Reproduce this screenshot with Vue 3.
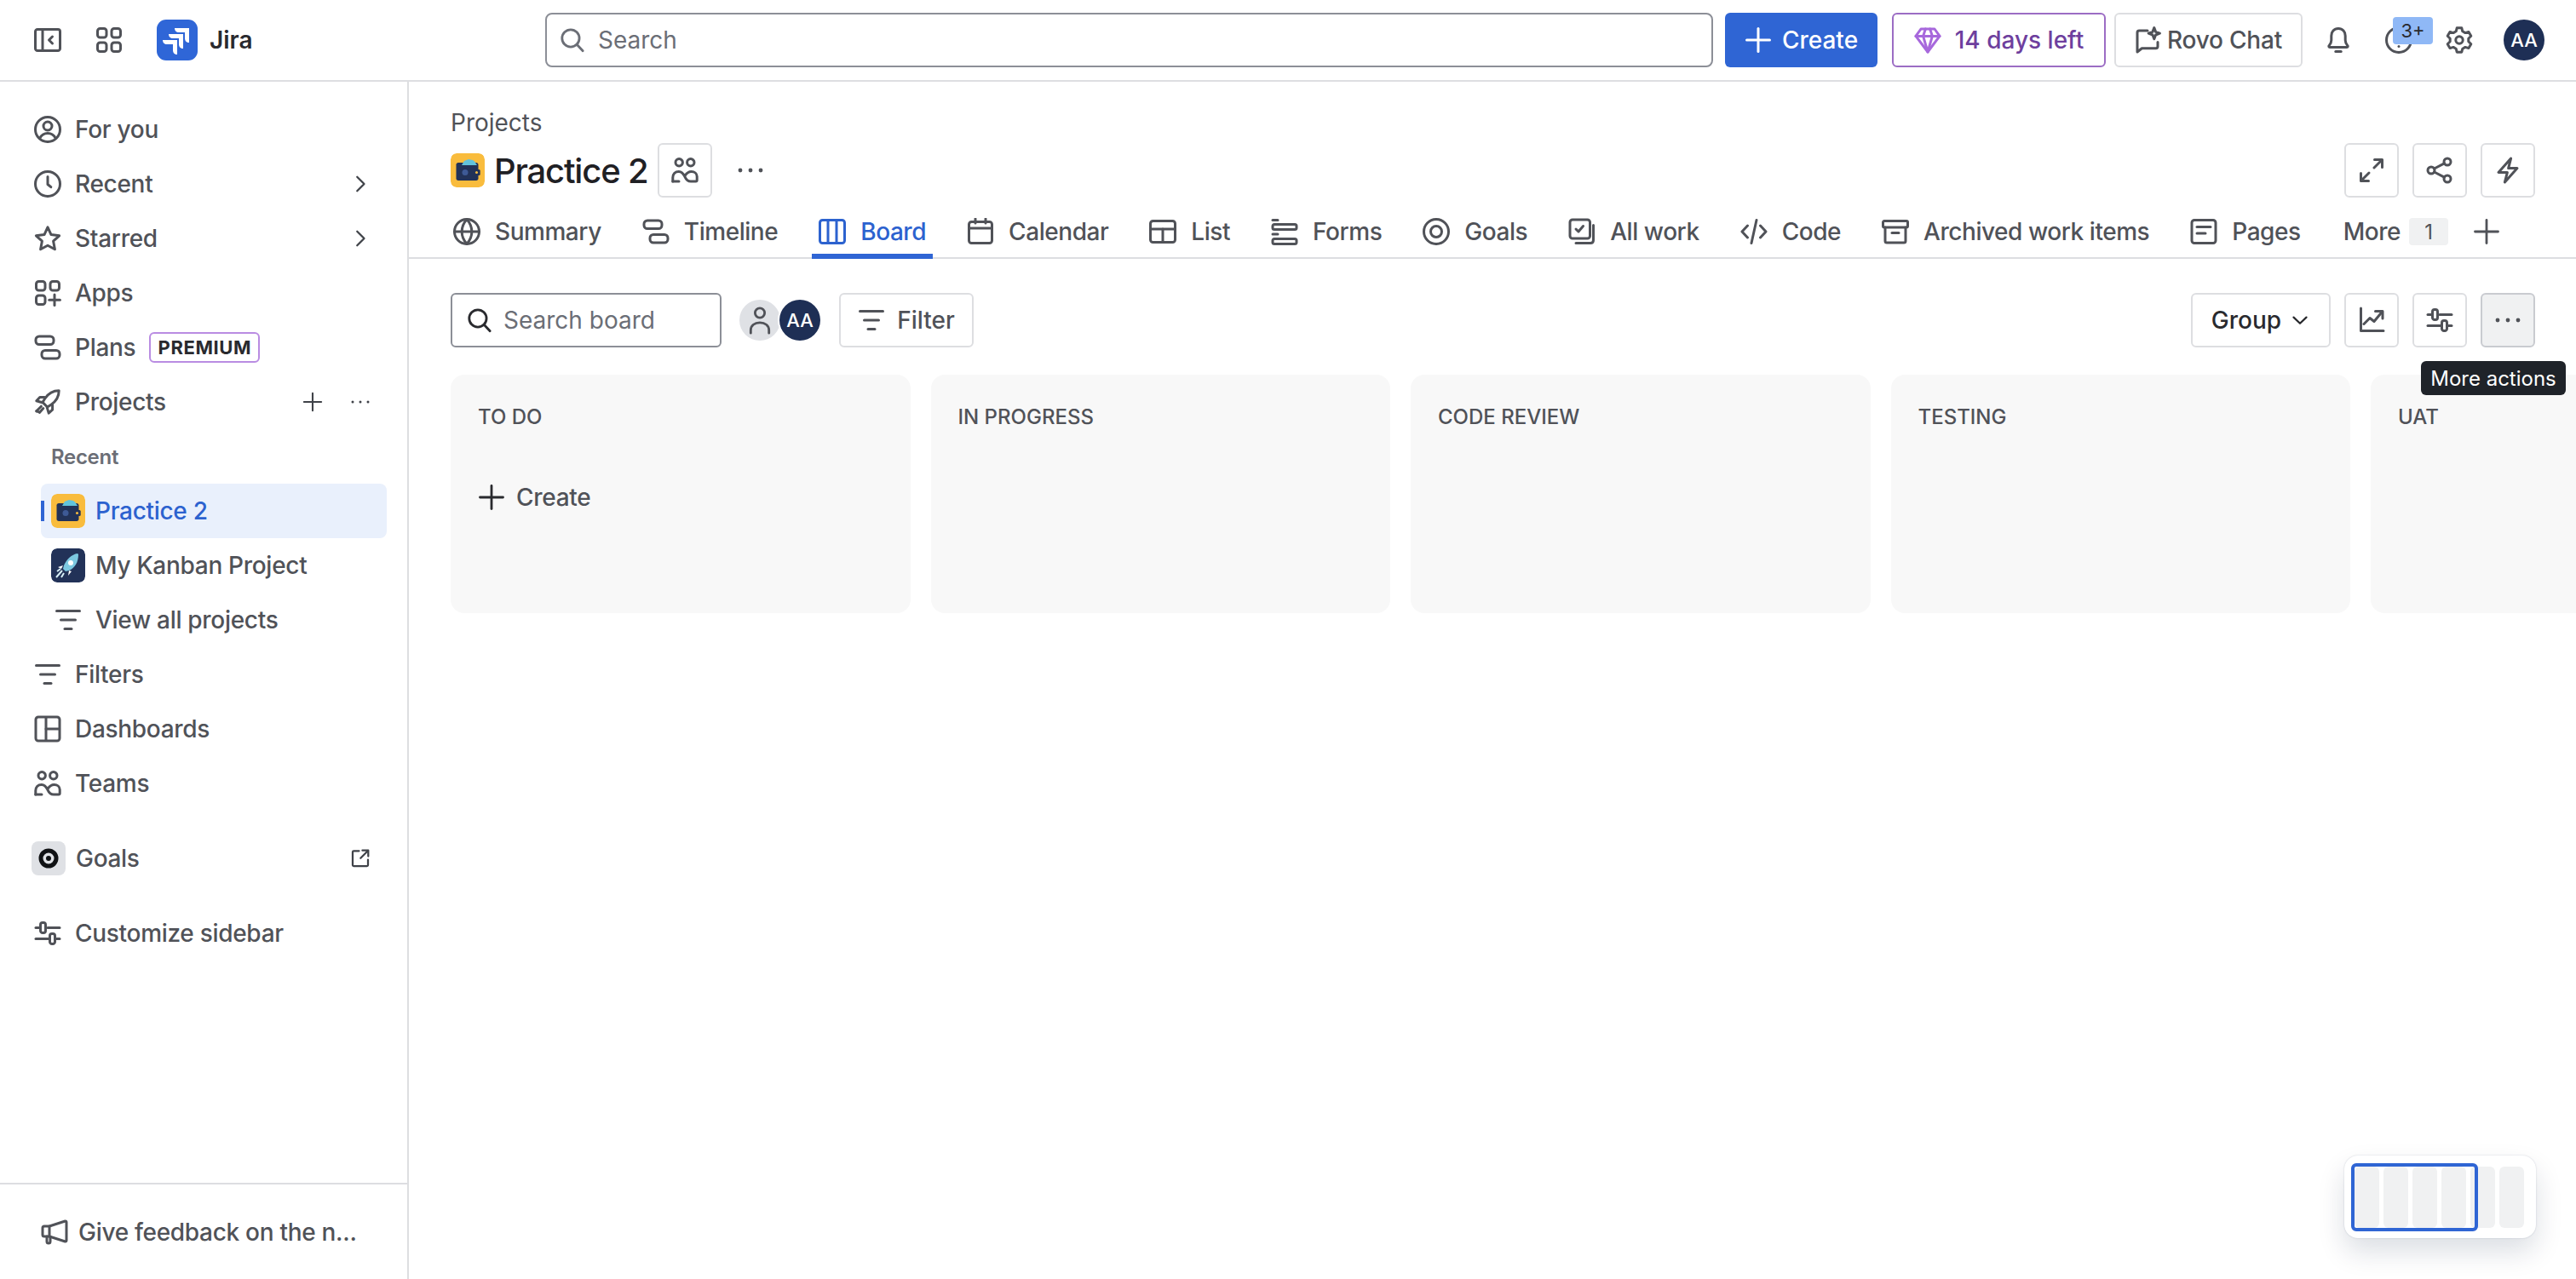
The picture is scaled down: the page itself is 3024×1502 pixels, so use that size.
<script setup>
import { h } from 'vue'

const rr = (x, y, w, h2, r) =>
  `M${x + r} ${y}h${w - 2 * r}a${r} ${r} 0 0 1 ${r} ${r}v${h2 - 2 * r}a${r} ${r} 0 0 1 -${r} ${r}h-${w - 2 * r}a${r} ${r} 0 0 1 -${r} -${r}v-${h2 - 2 * r}a${r} ${r} 0 0 1 ${r} -${r}z`
const c = (x, y, r) => `M${x - r} ${y}a${r} ${r} 0 1 0 ${2 * r} 0a${r} ${r} 0 1 0 -${2 * r} 0z`

const paths = {
  collapse: [rr(0.75, 1.75, 14.5, 12.5, 1.25), 'M5 2v12', 'M10.75 6 8.75 8l2 2'],
  apps: [rr(1.25, 1.25, 5.25, 5.25, 1.5), rr(9.5, 1.25, 5.25, 5.25, 1.5), rr(1.25, 9.5, 5.25, 5.25, 1.5), rr(9.5, 9.5, 5.25, 5.25, 1.5)],
  appsAdd: [rr(1.25, 1.25, 5.25, 5.25, 1.5), rr(9.5, 1.25, 5.25, 5.25, 1.5), rr(1.25, 9.5, 5.25, 5.25, 1.5), 'M12 9v6.25', 'M8.9 12.1h6.3'],
  foryou: [c(8, 8, 7.25), c(8, 6, 2.5), 'M3.4 13.2c1-2 2.6-2.9 4.6-2.9s3.6.9 4.6 2.9'],
  clock: [c(8, 8, 7.25), 'M8 3.75v4.5l1.9 1.6'],
  star: ['M8 1.4l2 4.4 4.8.6-3.5 3.2.9 4.8L8 12.1l-4.2 2.3.9-4.8-3.5-3.2 4.8-.6z'],
  plans: [rr(1, 1.5, 10.5, 4.75, 2), rr(4.5, 9.75, 10.5, 4.75, 2)],
  rocket: ['M14.6 1.4c-3.6 0-6.2 1.6-8.2 4.6L5 8.2 7.8 11l2.2-1.4c3-2 4.6-4.6 4.6-8.2z', 'M6.2 5.2H3.4L1.4 7.4l3.4 1', 'M10.8 9.8v2.8l-2.2 2-1-3.4', 'M4.2 10.6 1.4 13.4', 'M5.4 11.8l-2.2 2.4', 'M1.4 13.4l1.2.4'],
  filter: ['M1.25 2.75h13.5', 'M3.75 8h8.5', 'M6 13.25h4'],
  dash: [rr(1, 1, 14, 14, 1.5), 'M7 1.2v13.6', 'M7 8h7.8'],
  teams: [c(4.6, 3.4, 2.1), c(11.4, 3.4, 2.1), 'M.9 14.5v-2.2c0-2.1 1.5-3.6 3.5-3.6 2.2 0 2.9 1.6 3.6 3.1.7 1.6 1.5 2.7 3.5 2.7h2.9c.4 0 .7-.3.7-.7v-2.2c0-1.7-1.5-2.9-3.3-2.9-1.6 0-2.7.8-3.7 2.4', 'M.9 14.5h3.6'],
  external: ['M7 2.2H2.8c-.5 0-.8.3-.8.8v10.2c0 .5.3.8.8.8h10.4c.5 0 .8-.3.8-.8V9', 'M8.2 7.8 14 2', 'M9.6 1.8h4.6v4.6'],
  sliders: ['M1 4.75h2.5', 'M8 4.75h7', rr(3.75, 1.75, 3, 6, 1.25), 'M1 11.25h8', 'M13 11.25h2', rr(9.25, 8.25, 3, 6, 1.25)],
  plus: ['M8 1.25v13.5', 'M1.25 8h13.5'],
  dots: ['M2 8h.01', 'M8 8h.01', 'M14 8h.01'],
  right: ['M5.5 2.5 11 8l-5.5 5.5'],
  down: ['M3 5.75 8 10.5l5-4.75'],
  search: [c(6.9, 6.9, 5.4), 'M10.9 10.9l3.6 3.9'],
  bell: ['M8 1.25c-2.6 0-4.1 2-4.1 4.2v2.7c0 1.2-.5 2.2-1.3 3.1-.4.4-.2 1 .4 1h10c.6 0 .8-.6.4-1-.8-.9-1.3-1.9-1.3-3.1V5.45c0-2.2-1.5-4.2-4.1-4.2z', 'M6.4 14.75h3.2'],
  help: [c(8, 8, 7.25), 'M6 6.2C6 5 7 4.4 8 4.4s2 .7 2 1.8c0 1.6-2 1.6-2 3.2', 'M8 11.7h.01'],
  gear: ['M6.6.9h2.8l.5 2 1.6.9 2-.6 1.4 2.4-1.5 1.5v1.8l1.5 1.5-1.4 2.4-2-.6-1.6.9-.5 2H6.6l-.5-2-1.6-.9-2 .6-1.4-2.4 1.5-1.5V7.1L1.1 5.6 2.5 3.2l2 .6 1.6-.9z', c(8, 8, 2.1)],
  rovo: ['M7.5 2.5H2.6c-.6 0-1.1.5-1.1 1.1V15l2.7-2.1h8.2c.6 0 1.1-.5 1.1-1.1V9.2', 'M11.4.8l.9 2.4 2.4.9-2.4.9-.9 2.4-.9-2.4-2.4-.9 2.4-.9z'],
  gem: ['M4 1.5h8l3 4.2L8 15 1 5.7z', 'M1 5.7h14', 'M5.3 5.7 8 15l2.7-9.3', 'M5.3 5.7 6.7 1.5', 'M10.7 5.7 9.3 1.5'],
  globe: [c(8, 8, 7.25), 'M.75 8h14.5', 'M8 .75c-3.9 4.5-3.9 10 0 14.5 3.9-4.5 3.9-10 0-14.5z'],
  board: [rr(.75, 1.25, 14.5, 13.5, 1.5), 'M5.5 1.5v13', 'M10.5 1.5v13'],
  calendar: [rr(1.25, 2.25, 13.5, 12.5, 1.5), 'M1.5 6h13', 'M5 .5V3', 'M11 .5V3'],
  list: [rr(.75, 1.75, 14.5, 12.5, 1.5), 'M1 6.5h14', 'M8 6.5v7.5'],
  forms: ['M1 1.25h3', rr(1, 3.75, 14, 3, 1), 'M1 9.5h3', rr(1, 12.25, 14, 3, 1)],
  goal: [c(8, 8, 7.25), c(8, 8, 3.25)],
  allwork: [rr(1, 1, 11.75, 11, 1.5), 'M4.5 6.5 6 8l2.75-3.25', 'M14.75 4.25V13c0 1.1-.7 1.75-1.75 1.75H4.5'],
  code: ['M4.25 4.5 1 8l3.25 3.5', 'M11.75 4.5 15 8l-3.25 3.5', 'M9.5 1.25l-3 13.5'],
  archive: [rr(.75, 1.75, 14.5, 3.75, .75), 'M2 5.5v8c0 .6.4 1 1 1h10c.6 0 1-.4 1-1v-8', 'M6 8.75h4'],
  pages: [rr(1, 1.25, 14, 13.5, 1.5), 'M4 5.25h8', 'M4 9h5'],
  expand: ['M9.5 6.5 14 2', 'M9.75 1.75h4.5v4.5', 'M6.5 9.5 2 14', 'M1.75 9.75v4.5h4.5'],
  share: [c(12.5, 3, 2), c(12.5, 13, 2), c(3, 8, 2), 'M4.8 7 10.7 3.9', 'M4.8 9l5.9 3.1'],
  bolt: ['M9.8 1 2.5 9.2h5.2L6.2 15l7.3-8.2H8.3z'],
  chart: ['M1.75 1v13.25H15', 'M3.5 10.25 7 6.75l2.5 2L14.25 3', 'M10.25 2.75h4.25V7'],
  megaphone: ['M14.25 1.5 5 4.5H2c-.6 0-1 .4-1 1v4c0 .6.4 1 1 1h3l9.25 3c.4 0 .75-.3.75-.75V2.25c0-.45-.35-.75-.75-.75z', 'M3.5 10.5v3c0 .7.4 1 1 1s1-.3 1-1v-2.8', 'M5 4.5v6'],
  person: [c(8, 4.25, 2.5), 'M3.25 14.75v-1.5c0-2.4 2-4 4.75-4s4.75 1.6 4.75 4v1.5']
}

const Ic = (props) =>
  h(
    'svg',
    {
      viewBox: '0 0 16 16',
      width: props.s || 32,
      height: props.s || 32,
      fill: 'none',
      stroke: 'currentColor',
      'stroke-width': props.w || 1.5,
      'stroke-linecap': 'round',
      'stroke-linejoin': 'round',
      class: 'ic'
    },
    paths[props.n].map((d) => h('path', { d }))
  )
Ic.props = ['n', 's', 'w']

const Wallet = () =>
  h('svg', { viewBox: '0 0 40 40', width: 40, height: 40, class: 'pj' }, [
    h('rect', { width: 40, height: 40, rx: 7, fill: '#f9bc3d' }),
    h('path', { d: 'M6.5 13.5c0-1.4 1-2.5 2.5-2.500h21c1.400 0 2.500 1 2.500 2.500v16c0 1.400-1 2.500-2.500 2.500H9c-1.500 0-2.500-1-2.500-2.500z', fill: '#223258' }),
    h('path', { d: 'M13 14l3-5 5-2 5 1 2 1.500 3 4.500z', fill: '#62c3dc' }),
    h('rect', { x: 28, y: 19, width: 6.700, height: 7, rx: 1.500, fill: '#223258' }),
    h('circle', { cx: 17, cy: 22.500, r: 3.500, fill: '#3e5a96' }),
    h('circle', { cx: 30.500, cy: 22.500, r: 1.500, fill: '#f9bc3d' })
  ])

const mainNav = [
  { n: 'foryou', t: 'For you' },
  { n: 'clock', t: 'Recent', more: true },
  { n: 'star', t: 'Starred', more: true },
  { n: 'appsAdd', t: 'Apps' }
]
const lowerNav = [
  { n: 'filter', t: 'Filters' },
  { n: 'dash', t: 'Dashboards' },
  { n: 'teams', t: 'Teams' }
]
const tabs = [
  { n: 'globe', t: 'Summary' },
  { n: 'plans', t: 'Timeline' },
  { n: 'board', t: 'Board', active: true },
  { n: 'calendar', t: 'Calendar' },
  { n: 'list', t: 'List' },
  { n: 'forms', t: 'Forms' },
  { n: 'goal', t: 'Goals' },
  { n: 'allwork', t: 'All work' },
  { n: 'code', t: 'Code' },
  { n: 'archive', t: 'Archived work items' },
  { n: 'pages', t: 'Pages' }
]
const columns = ['TO DO', 'IN PROGRESS', 'CODE REVIEW', 'TESTING', 'UAT']
</script>

<template>
  <div class="page">
    <header class="topbar">
      <div class="brand">
        <Ic n="collapse" class="muted" />
        <Ic n="apps" class="muted" />
        <div class="brand-logo">
          <svg class="jira" viewBox="0 0 48 48" width="48" height="48">
            <path d="M21 10h17v17c-3 0-5-2-5-5v-7h-7c-3 0-5-2-5-5z" fill="#fff" />
            <path d="M14 17h17v17c-3 0-5-2-5-5v-7h-7c-3 0-5-2-5-5z" fill="#fff" />
            <path d="M7 24h17v17c-3 0-5-2-5-5v-7h-7c-3 0-5-2-5-5z" fill="#fff" />
          </svg>
          <span class="jira-name">Jira</span>
        </div>
      </div>
      <div class="global-search">
        <Ic n="search" s="30" />
        <span>Search</span>
      </div>
      <button class="btn-create"><Ic n="plus" /><span>Create</span></button>
      <button class="btn-trial"><Ic n="gem" class="gem" /><span>14 days left</span></button>
      <button class="btn-rovo"><Ic n="rovo" /><span>Rovo Chat</span></button>
      <div class="top-icons">
        <Ic n="bell" />
        <div class="help">
          <Ic n="help" />
          <span class="badge">3+</span>
        </div>
        <Ic n="gear" />
        <div class="avatar top-avatar">AA</div>
      </div>
    </header>

    <div class="body">
      <aside class="sidebar">
        <nav class="nav">
          <div v-for="item in mainNav" :key="item.t" class="row">
            <Ic :n="item.n" class="row-ic" />
            <span class="row-label">{{ item.t }}</span>
            <Ic v-if="item.more" n="right" s="24" class="row-end" />
          </div>
          <div class="row">
            <Ic n="plans" class="row-ic" />
            <span>Plans</span>
            <span class="premium">PREMIUM</span>
          </div>
          <div class="row">
            <Ic n="rocket" class="row-ic" />
            <span class="row-label">Projects</span>
            <Ic n="plus" s="24" class="row-add" w="1.4" />
            <Ic n="dots" s="24" class="row-end" w="2" />
          </div>
          <div class="group-label">Recent</div>
          <div class="sub-row selected">
            <i class="sel-bar"></i>
            <Wallet />
            <span>Practice 2</span>
          </div>
          <div class="sub-row">
            <svg class="pj" viewBox="0 0 40 40" width="40" height="40">
              <rect width="40" height="40" rx="7" fill="#223258" />
              <path d="M31 6c-7 1-13 7-16 14l-1 4 3 3 4-1c7-3 11-10 11-19z" fill="#7cc8e0" />
              <circle cx="23" cy="17" r="3" fill="#fff" />
              <path d="M14 20l-6 2 4 2z M21 26l-1 6 4-5z" fill="#fff" />
              <path d="M13 26 6 34M15 29l-3 5M11 24l-4 3" stroke="#d8f0f7" stroke-width="2" />
            </svg>
            <span>My Kanban Project</span>
          </div>
          <div class="sub-row">
            <span class="pj-ic"><Ic n="filter" w="1.5" /></span>
            <span>View all projects</span>
          </div>
          <div v-for="item in lowerNav" :key="item.t" class="row">
            <Ic :n="item.n" class="row-ic" />
            <span class="row-label">{{ item.t }}</span>
          </div>
          <div class="row spaced">
            <span class="goal-tile">
              <svg viewBox="0 0 24 24" width="24" height="24">
                <circle cx="12" cy="12" r="9" fill="none" stroke="#101214" stroke-width="5" />
                <circle cx="12" cy="12" r="3" fill="#101214" />
              </svg>
            </span>
            <span class="row-label">Goals</span>
            <Ic n="external" s="24" class="row-end" />
          </div>
          <div class="row spaced">
            <Ic n="sliders" class="row-ic" />
            <span class="row-label">Customize sidebar</span>
          </div>
        </nav>
        <footer class="side-foot">
          <Ic n="megaphone" />
          <span>Give feedback on the n...</span>
        </footer>
      </aside>

      <main class="main">
        <div class="crumbs">Projects</div>
        <div class="title-row">
          <Wallet />
          <h1>Practice 2</h1>
          <button class="square people"><Ic n="teams" /></button>
          <Ic n="dots" s="32" class="title-dots" w="2.4" />
          <div class="title-actions">
            <button class="square"><Ic n="expand" /></button>
            <button class="square"><Ic n="share" /></button>
            <button class="square"><Ic n="bolt" /></button>
          </div>
        </div>
        <div class="tabs">
          <div v-for="tab in tabs" :key="tab.t" class="tab" :class="{ active: tab.active }">
            <Ic :n="tab.n" />
            <span>{{ tab.t }}</span>
          </div>
          <div class="tab tab-more">
            <span>More</span>
            <span class="count">1</span>
          </div>
          <Ic n="plus" class="tab-plus" w="1.4" />
        </div>
        <div class="toolbar">
          <div class="board-search">
            <Ic n="search" s="30" class="dark" />
            <span>Search board</span>
          </div>
          <div class="people-stack">
            <span class="person"><Ic n="person" s="36" w="1.25" /></span>
            <span class="avatar stack-avatar">AA</span>
          </div>
          <button class="btn-filter"><Ic n="filter" /><span>Filter</span></button>
          <div class="toolbar-right">
            <button class="btn-group"><span>Group</span><Ic n="down" s="24" /></button>
            <button class="square"><Ic n="chart" /></button>
            <button class="square"><Ic n="sliders" /></button>
            <div class="more-wrap">
              <button class="square pressed"><Ic n="dots" s="32" w="2.4" /></button>
              <div class="tooltip">More actions</div>
            </div>
          </div>
        </div>
        <div class="columns">
          <section v-for="(col, i) in columns" :key="col" class="column">
            <h2>{{ col }}</h2>
            <div v-if="i === 0" class="col-create">
              <Ic n="plus" w="1.4" />
              <span>Create</span>
            </div>
          </section>
        </div>
        <div class="minimap">
          <span v-for="b in 6" :key="b" class="mini-col"></span>
          <span class="mini-frame"></span>
        </div>
      </main>
    </div>
  </div>
</template>

<style scoped>
.page {
  width: 3024px;
  height: 1502px;
  overflow: hidden;
  display: flex;
  flex-direction: column;
  background: #fff;
  color: #505258;
  font-family: Inter, "Noto Sans", sans-serif;
  font-size: 28px;
  font-weight: 500;
}
.ic { flex: none; display: block; }
button {
  font: inherit;
  color: inherit;
  background: #fff;
  display: flex;
  align-items: center;
  justify-content: center;
  box-sizing: border-box;
  padding: 0;
  margin: 0;
}

/* top bar */
.topbar {
  height: 96px;
  box-sizing: border-box;
  border-bottom: 2px solid #dddee1;
  display: flex;
  align-items: center;
  padding: 0 36px 0 40px;
  flex: none;
}
.brand { display: flex; align-items: center; gap: 40px; width: 600px; flex: none; }
.brand-logo { display: flex; align-items: center; gap: 14px; }
.jira { background: #2f66d7; border-radius: 11px; display: block; flex: none; }
.jira-name { font-size: 28px; font-weight: 600; color: #292a2e; }
.global-search {
  width: 1371px;
  height: 64px;
  box-sizing: border-box;
  border: 2px solid #8c8f97;
  border-radius: 8px;
  display: flex;
  align-items: center;
  gap: 15px;
  padding-left: 15px;
  color: #6b6e76;
  font-weight: 400;
  flex: none;
}
.btn-create {
  width: 179px;
  height: 64px;
  margin-left: 14px;
  background: #2f65d4;
  color: #fff;
  border: 0;
  border-radius: 6px;
  gap: 12px;
  flex: none;
}
.btn-trial {
  width: 251px;
  height: 64px;
  margin-left: 17px;
  border: 2px solid #9c6dc4;
  border-radius: 6px;
  color: #6e3f9e;
  gap: 16px;
  flex: none;
}
.gem { color: #a768dc; }
.btn-rovo {
  width: 221px;
  height: 64px;
  margin-left: 10px;
  border: 2px solid #dddee1;
  border-radius: 6px;
  gap: 6px;
  letter-spacing: -.2px;
  flex: none;
}
.top-icons { display: flex; align-items: center; gap: 39px; margin-left: 26px; flex: none; }
.help { position: relative; }
.badge {
  position: absolute;
  left: 9px;
  top: -11px;
  width: 47px;
  height: 32px;
  background: #8fb8f6;
  color: #292a2e;
  border-radius: 4px;
  font-size: 22px;
  font-weight: 400;
  display: flex;
  align-items: center;
  justify-content: center;
}
.avatar {
  background: #1e2f55;
  color: #fff;
  border-radius: 50%;
  width: 48px;
  height: 48px;
  font-size: 22px;
  font-weight: 500;
  display: flex;
  align-items: center;
  justify-content: center;
  flex: none;
}
.top-avatar { margin-left: -3px; }

/* body */
.body { flex: 1; display: flex; min-height: 0; }
.sidebar {
  width: 480px;
  box-sizing: border-box;
  border-right: 2px solid #dddee1;
  display: flex;
  flex-direction: column;
  flex: none;
  letter-spacing: -.3px;
}
.nav { padding: 24px 24px 0 32px; display: flex; flex-direction: column; flex: 1; }
.row {
  height: 64px;
  display: flex;
  align-items: center;
  padding: 0 19px 0 8px;
  gap: 16px;
  flex: none;
}
.row-label { flex: 1; }
.row-add { margin-right: 16px; color: #3f4248; }
.row-end { color: #3f4248; }
.premium {
  box-sizing: border-box;
  height: 36px;
  width: 130px;
  justify-content: center;
  border: 2px solid #b98ce2;
  border-radius: 6px;
  font-size: 22px;
  font-weight: 700;
  letter-spacing: .6px;
  color: #292a2e;
  display: flex;
  align-items: center;
}
.group-label {
  height: 64px;
  display: flex;
  align-items: center;
  padding-left: 28px;
  font-size: 24px;
  font-weight: 600;
  color: #6b6e76;
}
.sub-row {
  position: relative;
  height: 64px;
  margin-left: 16px;
  border-radius: 8px;
  display: flex;
  align-items: center;
  gap: 12px;
  padding-left: 12px;
  flex: none;
}
.selected { background: #e9f0fc; color: #2c62cf; }
.sel-bar {
  position: absolute;
  left: 0;
  top: 20px;
  width: 4px;
  height: 24px;
  background: #2f65d4;
}
.pj { border-radius: 7px; flex: none; display: block; }
.pj-ic { width: 40px; display: flex; justify-content: center; flex: none; }
.spaced { margin-top: 24px; }
.goal-tile {
  width: 40px;
  height: 40px;
  margin-left: -3px;
  margin-right: -4px;
  background: #dfe1e5;
  border-radius: 8px;
  display: flex;
  align-items: center;
  justify-content: center;
  flex: none;
}
.side-foot {
  height: 113px;
  box-sizing: border-box;
  border-top: 2px solid #dddee1;
  display: flex;
  align-items: center;
  padding-left: 48px;
  gap: 12px;
  flex: none;
}

/* main */
.main { flex: 1; min-width: 0; position: relative; overflow: hidden; padding-top: 28px; }
.crumbs { padding-left: 49px; height: 40px; display: flex; align-items: center; font-weight: 400; }
.title-row {
  height: 64px;
  margin-top: 4px;
  display: flex;
  align-items: center;
  padding: 0 48px 0 49px;
}
h1 {
  margin: 0 0 0 11px;
  font-size: 40px;
  font-weight: 500;
  color: #1f2024;
  letter-spacing: -1.2px;
}
.square {
  width: 64px;
  height: 64px;
  border: 2px solid #dddee1;
  border-radius: 6px;
  flex: none;
}
.people { margin-left: 12px; }
.title-dots { margin-left: 29px; }
.title-actions { margin-left: auto; display: flex; gap: 16px; }
.tabs {
  height: 64px;
  margin-top: 8px;
  box-sizing: border-box;
  border-bottom: 2px solid #dddee1;
  padding-left: 44px;
  display: flex;
  gap: 32px;
  align-items: stretch;
  letter-spacing: -.45px;
}
.tab {
  position: relative;
  display: flex;
  align-items: center;
  gap: 17px;
  padding: 2px 8px 0;
  white-space: nowrap;
}
.tab.active { color: #2c62cf; }
.tab.active::after {
  content: "";
  position: absolute;
  left: 0;
  right: 0;
  bottom: -2px;
  height: 6px;
  background: #2f65d4;
}
.tab-more { gap: 10px; padding-right: 0; margin-left: 2px; }
.count {
  width: 46px;
  height: 32px;
  background: #f0f1f2;
  border-radius: 4px;
  font-size: 24px;
  font-weight: 400;
  letter-spacing: 0;
  display: flex;
  align-items: center;
  justify-content: center;
}
.tab-plus { align-self: center; margin-left: -3px; margin-top: 2px; }
.toolbar {
  height: 64px;
  margin-top: 40px;
  padding: 0 48px 0 49px;
  display: flex;
  align-items: center;
}
.board-search {
  width: 318px;
  height: 64px;
  box-sizing: border-box;
  border: 2px solid #8c8f97;
  border-radius: 6px;
  display: flex;
  align-items: center;
  gap: 13px;
  padding-left: 17px;
  color: #6b6e76;
  font-weight: 400;
  flex: none;
}
.dark { color: #292a2e; }
.people-stack { display: flex; align-items: center; margin-left: 21px; flex: none; }
.person {
  width: 48px;
  height: 48px;
  border-radius: 50%;
  background: #dfe1e5;
  display: flex;
  align-items: center;
  justify-content: center;
  color: #505258;
}
.stack-avatar { margin-left: -1px; box-shadow: 0 0 0 2px #fff; position: relative; }
.btn-filter {
  width: 158px;
  height: 64px;
  margin-left: 22px;
  border: 2px solid #dddee1;
  border-radius: 6px;
  gap: 14px;
  flex: none;
}
.toolbar-right { margin-left: auto; display: flex; gap: 16px; }
.btn-group {
  width: 164px;
  height: 64px;
  border: 2px solid #dddee1;
  border-radius: 6px;
  gap: 10px;
  color: #292a2e;
}
.more-wrap { position: relative; }
.pressed { background: #f0f1f2; border-color: #c9cbd0; }
.tooltip {
  position: absolute;
  top: 80px;
  left: -70px;
  z-index: 2;
  width: 170px;
  height: 40px;
  background: #1f2329;
  color: #fff;
  border-radius: 6px;
  font-size: 24px;
  font-weight: 400;
  display: flex;
  align-items: center;
  justify-content: center;
  white-space: nowrap;
}
.columns {
  margin-top: 32px;
  padding-left: 49px;
  display: flex;
  gap: 24px;
}
.column {
  width: 539.5px;
  height: 280px;
  background: #f8f8f8;
  border-radius: 16px;
  flex: none;
  box-sizing: border-box;
  padding: 32px 32px;
}
h2 {
  margin: 0;
  font-size: 24px;
  line-height: 36px;
  font-weight: 500;
  color: #505258;
}
.col-create {
  margin-top: 44px;
  height: 64px;
  display: flex;
  align-items: center;
  gap: 13px;
  color: #505258;
  letter-spacing: -.3px;
}
.col-create .ic { color: #292a2e; }
.minimap {
  position: absolute;
  right: 47px;
  bottom: 48px;
  width: 225px;
  height: 97px;
  box-sizing: border-box;
  padding: 13px 14px 12px 12px;
  background: #fff;
  border-radius: 16px;
  box-shadow: 0 16px 32px rgba(9, 30, 66, .14), 0 0 2px rgba(9, 30, 66, .2);
  display: flex;
  gap: 4.6px;
}
.mini-col { flex: 1; background: #f0f1f2; border-radius: 6px; }
.mini-frame {
  position: absolute;
  left: 8px;
  top: 9px;
  width: 149px;
  height: 80px;
  box-sizing: border-box;
  border: 4px solid #2f65d4;
  border-radius: 6px;
}
</style>
<style>
html, body { margin: 0; background: #fff; }
</style>
